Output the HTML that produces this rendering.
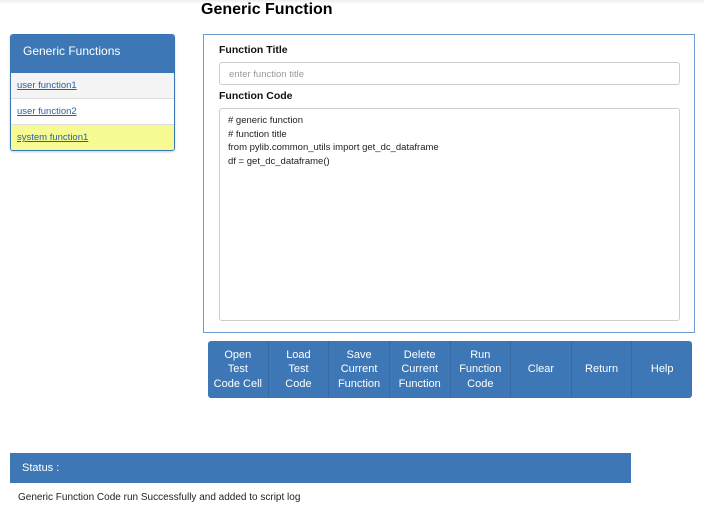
<!DOCTYPE html>
<html><head><style>
body{margin:0;width:704px;height:506px;background:#fff;font-family:"Liberation Sans",sans-serif;position:relative;overflow:hidden}
.abs{position:absolute}
h1{position:absolute;left:201px;top:0;margin:0;font-size:16px;font-weight:bold;color:#000;line-height:20px}
.lp{left:10px;top:34px;width:163px;height:115px;border:1px solid #3b76b4;border-radius:3px;overflow:hidden;box-shadow:0 1px 2px rgba(0,0,0,.2)}
.lh{background:#3d77b5;color:#fff;height:38px;line-height:32px;font-size:12px;padding-left:12px}
.it{height:25px;line-height:25px;font-size:9.5px;padding-left:6px;border-top:1px solid #ddd}
.it a{color:#2a5fa6;text-decoration:underline}
.fp{left:203px;top:34px;width:490px;height:297px;border:1px solid #6f9bd0}
.lbl{font-size:10.5px;font-weight:bold;color:#111}
.inp{border:1px solid #ccc;border-radius:3px;box-sizing:border-box}
.btns{left:208px;top:341px;width:484px;height:57px;background:#3d77b5;border-radius:3px;display:flex}
.b{flex:1;color:#fff;font-size:11px;line-height:14.5px;text-align:center;display:flex;align-items:center;justify-content:center;border-right:1px solid #356aa3}
.b:last-child{border-right:none}
</style></head><body>
<div class="abs" style="left:0;top:0;width:704px;height:4px;background:linear-gradient(#eee,#fff)"></div>
<h1>Generic Function</h1>
<div class="abs lp">
<div class="lh">Generic Functions</div>
<div class="it" style="background:#f4f4f4;border-top:none"><a>user function1</a></div>
<div class="it"><a>user function2</a></div>
<div class="it" style="background:#f5fa93"><a>system function1</a></div>
</div>
<div class="abs fp"></div>
<div class="abs lbl" style="left:219px;top:44px">Function Title</div>
<div class="abs inp" style="left:219px;top:62px;width:461px;height:23px;font-size:9.5px;color:#999;padding:6px 0 0 9px">enter function title</div>
<div class="abs lbl" style="left:219px;top:90px">Function Code</div>
<div class="abs inp" style="left:219px;top:108px;width:461px;height:213px;font-size:9.5px;color:#222;padding:5px 0 0 8px;line-height:13.5px">
# generic function<br># function title<br>from pylib.common_utils import get_dc_dataframe<br>df = get_dc_dataframe()</div>
<div class="abs btns">
<div class="b">Open<br>Test<br>Code Cell</div>
<div class="b">Load<br>Test<br>Code</div>
<div class="b">Save<br>Current<br>Function</div>
<div class="b">Delete<br>Current<br>Function</div>
<div class="b">Run<br>Function<br>Code</div>
<div class="b">Clear</div>
<div class="b">Return</div>
<div class="b">Help</div>
</div>
<div class="abs" style="left:10px;top:453px;width:621px;height:30px;background:#3d77b5;color:#fff;font-size:11px;line-height:30px;padding-left:12px;box-sizing:border-box">Status :</div>
<div class="abs" style="left:18px;top:492px;font-size:10px;color:#222">Generic Function Code run Successfully and added to script log</div>
</body></html>
